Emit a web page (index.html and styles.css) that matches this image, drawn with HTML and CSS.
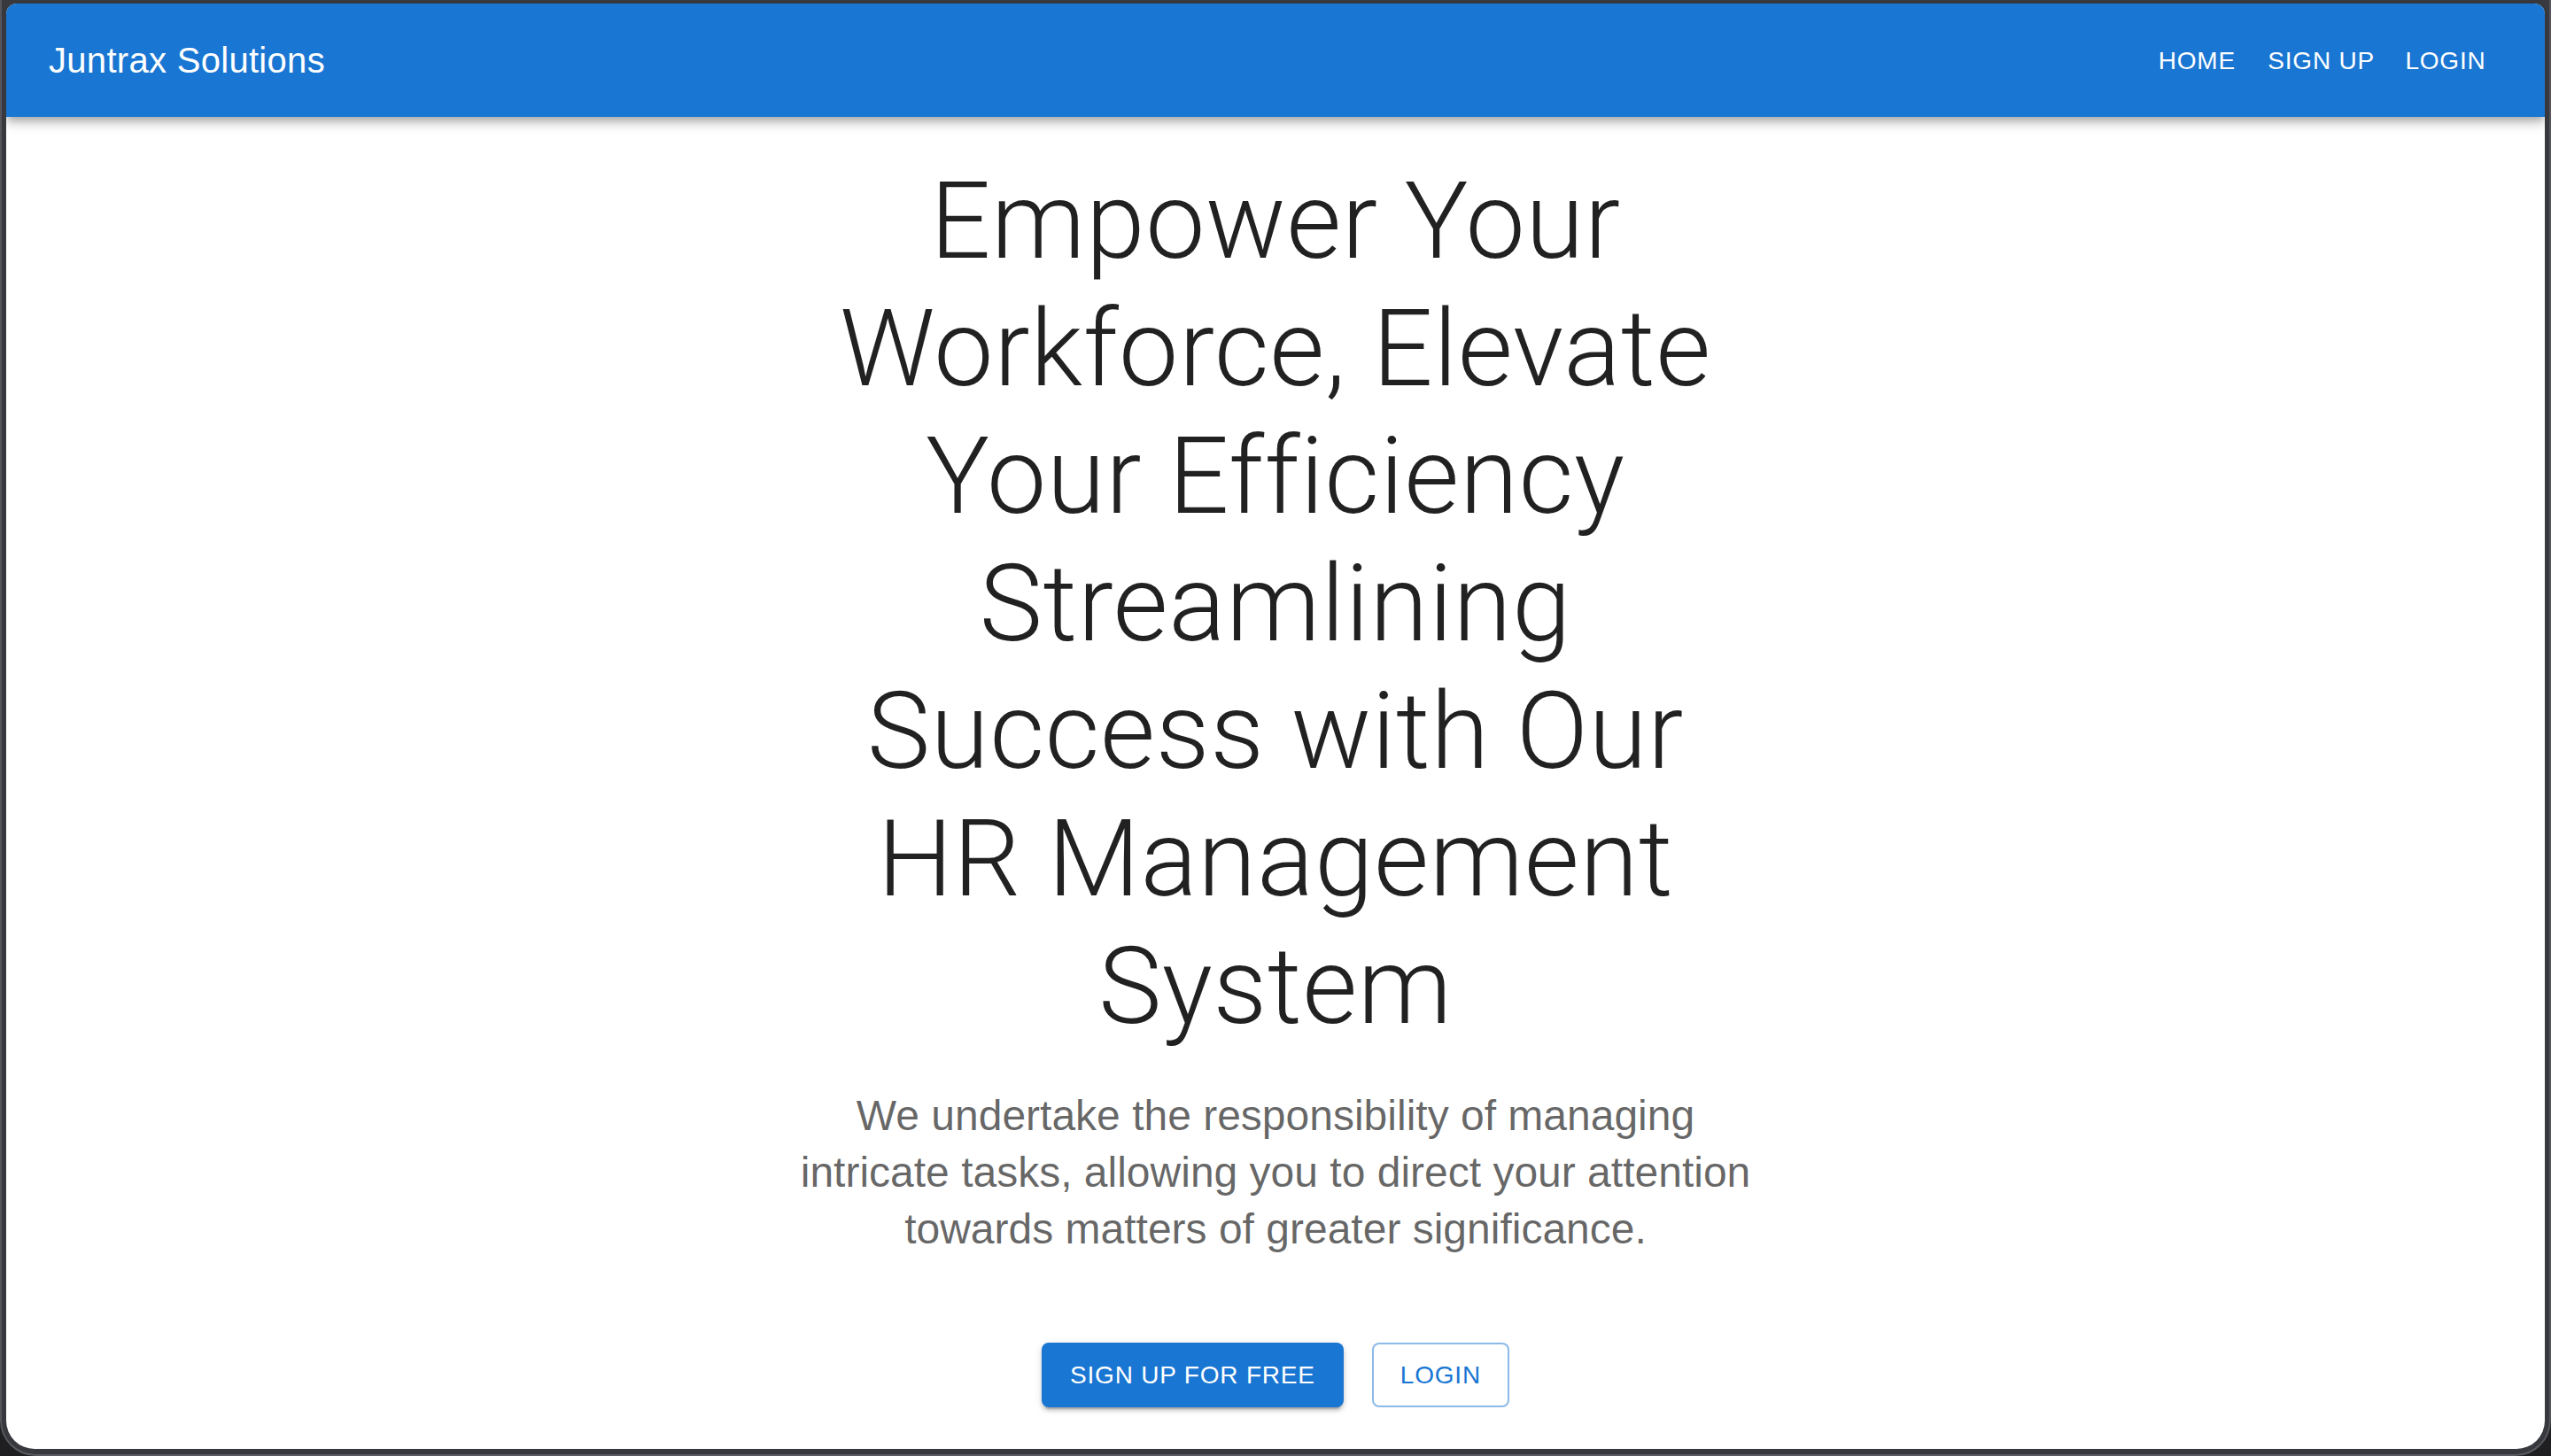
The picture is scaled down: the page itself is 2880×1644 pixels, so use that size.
FILE: index.html
```html
<!DOCTYPE html>
<html lang="en">
<head>
<meta charset="utf-8">
<title>Juntrax Solutions</title>
<link rel="stylesheet" href="styles.css">
</head>
<body>
<div class="screen">
  <div class="window">
    <header class="appbar">
      <div class="brand">Juntrax Solutions</div>
      <nav class="nav">
        <a class="nav-btn" href="#">Home</a>
        <a class="nav-btn" href="#">Sign up</a>
        <a class="nav-btn" href="#">Login</a>
      </nav>
    </header>
    <main class="hero">
      <div class="container">
        <h1 class="headline">Empower Your Workforce, Elevate Your Efficiency Streamlining Success with Our HR Management System</h1>
        <p class="lead">We undertake the responsibility of managing intricate tasks, allowing you to direct your attention towards matters of greater significance.</p>
        <div class="actions">
          <a class="btn btn-contained" href="#">Sign up for free</a>
          <a class="btn btn-outlined" href="#">Login</a>
        </div>
      </div>
    </main>
  </div>
</div>
</body>
</html>
```
FILE: styles.css
```css
* { box-sizing: border-box; }

html, body {
  margin: 0;
  padding: 0;
  background: #1f1f21;
}

body {
  font-family: "Liberation Sans", Arial, sans-serif;
}

.screen {
  width: 2880px;
  height: 1644px;
  padding: 4px 5px 6px 5px;
  background: #37393f;
  border-left: 2px solid #55565b;
  border-right: 2px solid #55565b;
  border-bottom: 2px solid #5a5b60;
  border-radius: 0 0 40px 40px;
}

.window {
  height: 100%;
  background: #ffffff;
  border-radius: 12px 12px 32px 32px;
  overflow: hidden;
  display: flex;
  flex-direction: column;
}

.appbar {
  position: relative;
  z-index: 2;
  height: 128px;
  flex: 0 0 128px;
  padding: 0 48px;
  display: flex;
  align-items: center;
  justify-content: space-between;
  background: #1976d2;
  color: #ffffff;
  box-shadow: 0 4px 8px -2px rgba(0,0,0,0.2), 0 8px 10px 0 rgba(0,0,0,0.14), 0 2px 20px 0 rgba(0,0,0,0.12);
}

.brand {
  font-size: 40px;
  line-height: 1.6;
  font-weight: 400;
  letter-spacing: 0.0075em;
}

.nav {
  display: flex;
  align-items: center;
}

.nav-btn {
  min-width: 128px;
  padding: 12px 16px;
  font-size: 28px;
  line-height: 1.75;
  letter-spacing: 0.02857em;
  text-transform: uppercase;
  text-align: center;
  color: #ffffff;
  text-decoration: none;
}

.hero {
  flex: 1;
  padding-top: 46px;
  text-align: center;
}

.container {
  max-width: 1200px;
  margin: 0 auto;
  padding: 0 48px;
}

.headline {
  margin: 0 0 42px 0;
  font-family: Roboto, "Liberation Sans", sans-serif;
  font-weight: 300;
  font-size: 120px;
  line-height: 144px;
  letter-spacing: 0.005em;
  color: rgba(0,0,0,0.87);
}

.lead {
  margin: 0 0 32px 0;
  font-size: 48px;
  line-height: 64px;
  font-weight: 400;
  color: rgba(0,0,0,0.6);
}

.actions {
  display: flex;
  justify-content: center;
  gap: 32px;
  padding-top: 64px;
}

.btn {
  min-width: 128px;
  font-size: 28px;
  line-height: 1.75;
  letter-spacing: 0.02857em;
  text-transform: uppercase;
  text-decoration: none;
  border-radius: 8px;
  display: inline-flex;
  align-items: center;
  justify-content: center;
}

.btn-contained {
  padding: 12px 32px;
  background: #1976d2;
  color: #ffffff;
  box-shadow: 0 6px 2px -4px rgba(0,0,0,0.2), 0 4px 4px 0 rgba(0,0,0,0.14), 0 2px 10px 0 rgba(0,0,0,0.12);
}

.btn-outlined {
  padding: 10px 30px;
  border: 2px solid rgba(25,118,210,0.5);
  color: #1976d2;
  background: #ffffff;
}
```
